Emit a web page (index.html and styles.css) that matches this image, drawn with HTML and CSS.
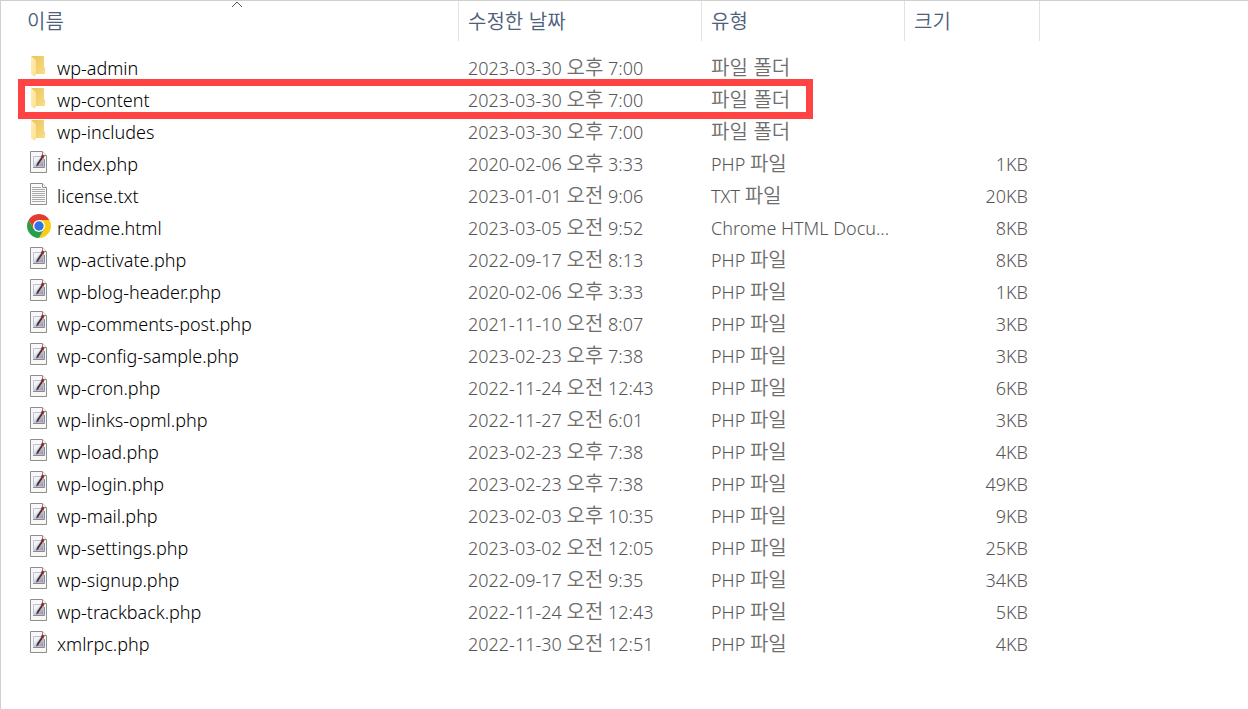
FILE: index.html
```html
<!DOCTYPE html>
<html lang="ko">
<head>
    <meta charset="utf-8">
    <meta name="viewport" content="width=device-width, initial-scale=1">
    <title>파일 목록</title>
    <link rel="stylesheet" href="styles.css">
</head>
<body>
<svg class="sprite" aria-hidden="true">
    <defs>
        <linearGradient id="folder-back" x1="0" y1="0" x2="1" y2="1">
            <stop offset="0" stop-color="#e8c35e"/>
            <stop offset="1" stop-color="#fbdc82"/>
        </linearGradient>
        <linearGradient id="folder-front" x1="0" y1="0" x2="1" y2="1">
            <stop offset="0" stop-color="#ffefb8"/>
            <stop offset="1" stop-color="#fbdf8c"/>
        </linearGradient>
        <linearGradient id="pad" x1="0" y1="0" x2="1" y2="1">
            <stop offset="0.3" stop-color="#f4f4fc"/>
            <stop offset="1" stop-color="#7d83b8"/>
        </linearGradient>
    </defs>
    <symbol id="folder" viewBox="0 0 24 24">
        <path d="M4 2h13v11l1 1v6H7z" fill="url(#folder-back)"/>
        <path d="M4 2l5 4v14l-1 3-4-3z" fill="url(#folder-front)"/>
    </symbol>
    <symbol id="php" viewBox="0 0 24 24">
        <path d="M3.5 1.5h12l4 4v17h-16z" fill="#f8f8f8" stroke="#8e8e8e"/>
        <path d="M15.5 1.5v4h4" fill="#fff" stroke="#8e8e8e"/>
        <path d="M6.500 6.500h10v10h-10z" fill="url(#pad)" stroke="#c2c2cc"/>
        <path d="M6 17.500h11.500V9" fill="none" stroke="#8a8a9c"/>
        <path d="M10.500 14.500l5-7.500" stroke="#3c3848" stroke-width="2"/>
        <path d="M12 15l4.500-7" stroke="#e0a060"/>
        <path d="M15 7.500l1.500-2.500" stroke="#8c3434" stroke-width="3"/>
        <path d="M9 16.500l1-3 2 1.500z" fill="#4a3c3c"/>
    </symbol>
    <symbol id="txt" viewBox="0 0 24 24">
        <path d="M3.5 1.5h12l4 4v17h-16z" fill="#fafafa" stroke="#8e8e8e"/>
        <path d="M15.5 1.5v4h4" fill="#fff" stroke="#8e8e8e"/>
        <path d="M5 5.500h9M5 7.500h13M5 9.500h13M5 11.500h13M5 13.500h13M5 15.500h13M5 17.500h13M5 19.500h13" stroke="#a8a8a8"/>
    </symbol>
    <symbol id="chrome" viewBox="0 0 24 24">
        <path d="M12 6h10.390A12 12 0 0 1 12 24l5.200-9z" fill="#fccb16"/>
        <path d="M1.610 6A12 12 0 0 0 12 24l5.200-9H6.800z" fill="#2a9d48"/>
        <path d="M1.610 6L6.800 15 12 12V6h10.390A12 12 0 0 0 1.610 6z" fill="#e33b2e"/>
        <circle cx="12" cy="12" r="6" fill="#fff"/>
        <circle cx="12" cy="12" r="4.700" fill="#2f74e0"/>
    </symbol>
</svg>

<main class="explorer">
    <table class="files">
        <colgroup>
            <col class="col-name">
            <col class="col-date">
            <col class="col-type">
            <col class="col-size">
            <col>
        </colgroup>
        <thead>
            <tr>
                <th aria-sort="ascending">
                    <button type="button">이름</button>
                    <svg class="sort" viewBox="0 0 12 7" aria-hidden="true"><path d="M1 6l5-5 5 5" fill="none" stroke="#555"/></svg>
                </th>
                <th><button type="button">수정한 날짜</button></th>
                <th><button type="button">유형</button></th>
                <th><button type="button">크기</button></th>
                <td></td>
            </tr>
        </thead>
        <tbody>
            <tr>
                <td><div class="name"><svg class="icon"><use href="#folder"/></svg>wp-admin</div></td>
                <td>2023-03-30 <span class="ko">오후</span> 7:00</td><td><span class="ko">파일 폴더</span></td><td class="size"></td><td></td>
            </tr>
            <tr class="marked">
                <td><div class="name"><svg class="icon"><use href="#folder"/></svg>wp-content</div><span class="marker"></span></td>
                <td>2023-03-30 <span class="ko">오후</span> 7:00</td><td><span class="ko">파일 폴더</span></td><td class="size"></td><td></td>
            </tr>
            <tr>
                <td><div class="name"><svg class="icon"><use href="#folder"/></svg>wp-includes</div></td>
                <td>2023-03-30 <span class="ko">오후</span> 7:00</td><td><span class="ko">파일 폴더</span></td><td class="size"></td><td></td>
            </tr>
            <tr>
                <td><div class="name"><svg class="icon"><use href="#php"/></svg>index.php</div></td>
                <td>2020-02-06 <span class="ko">오후</span> 3:33</td><td>PHP <span class="ko">파일</span></td><td class="size">1KB</td><td></td>
            </tr>
            <tr>
                <td><div class="name"><svg class="icon"><use href="#txt"/></svg>license.txt</div></td>
                <td>2023-01-01 <span class="ko">오전</span> 9:06</td><td>TXT <span class="ko">파일</span></td><td class="size">20KB</td><td></td>
            </tr>
            <tr>
                <td><div class="name"><svg class="icon"><use href="#chrome"/></svg>readme.html</div></td>
                <td>2023-03-05 <span class="ko">오전</span> 9:52</td><td>Chrome HTML Docu...</td><td class="size">8KB</td><td></td>
            </tr>
            <tr>
                <td><div class="name"><svg class="icon"><use href="#php"/></svg>wp-activate.php</div></td>
                <td>2022-09-17 <span class="ko">오전</span> 8:13</td><td>PHP <span class="ko">파일</span></td><td class="size">8KB</td><td></td>
            </tr>
            <tr>
                <td><div class="name"><svg class="icon"><use href="#php"/></svg>wp-blog-header.php</div></td>
                <td>2020-02-06 <span class="ko">오후</span> 3:33</td><td>PHP <span class="ko">파일</span></td><td class="size">1KB</td><td></td>
            </tr>
            <tr>
                <td><div class="name"><svg class="icon"><use href="#php"/></svg>wp-comments-post.php</div></td>
                <td>2021-11-10 <span class="ko">오전</span> 8:07</td><td>PHP <span class="ko">파일</span></td><td class="size">3KB</td><td></td>
            </tr>
            <tr>
                <td><div class="name"><svg class="icon"><use href="#php"/></svg>wp-config-sample.php</div></td>
                <td>2023-02-23 <span class="ko">오후</span> 7:38</td><td>PHP <span class="ko">파일</span></td><td class="size">3KB</td><td></td>
            </tr>
            <tr>
                <td><div class="name"><svg class="icon"><use href="#php"/></svg>wp-cron.php</div></td>
                <td>2022-11-24 <span class="ko">오전</span> 12:43</td><td>PHP <span class="ko">파일</span></td><td class="size">6KB</td><td></td>
            </tr>
            <tr>
                <td><div class="name"><svg class="icon"><use href="#php"/></svg>wp-links-opml.php</div></td>
                <td>2022-11-27 <span class="ko">오전</span> 6:01</td><td>PHP <span class="ko">파일</span></td><td class="size">3KB</td><td></td>
            </tr>
            <tr>
                <td><div class="name"><svg class="icon"><use href="#php"/></svg>wp-load.php</div></td>
                <td>2023-02-23 <span class="ko">오후</span> 7:38</td><td>PHP <span class="ko">파일</span></td><td class="size">4KB</td><td></td>
            </tr>
            <tr>
                <td><div class="name"><svg class="icon"><use href="#php"/></svg>wp-login.php</div></td>
                <td>2023-02-23 <span class="ko">오후</span> 7:38</td><td>PHP <span class="ko">파일</span></td><td class="size">49KB</td><td></td>
            </tr>
            <tr>
                <td><div class="name"><svg class="icon"><use href="#php"/></svg>wp-mail.php</div></td>
                <td>2023-02-03 <span class="ko">오후</span> 10:35</td><td>PHP <span class="ko">파일</span></td><td class="size">9KB</td><td></td>
            </tr>
            <tr>
                <td><div class="name"><svg class="icon"><use href="#php"/></svg>wp-settings.php</div></td>
                <td>2023-03-02 <span class="ko">오전</span> 12:05</td><td>PHP <span class="ko">파일</span></td><td class="size">25KB</td><td></td>
            </tr>
            <tr>
                <td><div class="name"><svg class="icon"><use href="#php"/></svg>wp-signup.php</div></td>
                <td>2022-09-17 <span class="ko">오전</span> 9:35</td><td>PHP <span class="ko">파일</span></td><td class="size">34KB</td><td></td>
            </tr>
            <tr>
                <td><div class="name"><svg class="icon"><use href="#php"/></svg>wp-trackback.php</div></td>
                <td>2022-11-24 <span class="ko">오전</span> 12:43</td><td>PHP <span class="ko">파일</span></td><td class="size">5KB</td><td></td>
            </tr>
            <tr>
                <td><div class="name"><svg class="icon"><use href="#php"/></svg>xmlrpc.php</div></td>
                <td>2022-11-30 <span class="ko">오전</span> 12:51</td><td>PHP <span class="ko">파일</span></td><td class="size">4KB</td><td></td>
            </tr>
        </tbody>
    </table>
</main>
</body>
</html>
```
FILE: styles.css
```css
* {
    box-sizing: border-box;
}
body {
    margin: 0;
    background: #fff;
    color: #555;
    font-family: "Noto Sans", "Noto Sans CJK KR", sans-serif;
    font-size: 18px;
    font-weight: 300;
    line-height: 24px;
}
.sprite {
    position: absolute;
    width: 0;
    height: 0;
}
.explorer {
    min-height: 100vh;
    border-top: 1px solid #d0d0d0;
    border-left: 1px solid #d0d0d0;
}
.files {
    width: 100%;
    table-layout: fixed;
    border-collapse: separate;
    border-spacing: 0;
}
.col-name {
    width: 458px;
}
.col-date {
    width: 243px;
}
.col-type {
    width: 203px;
}
.col-size {
    width: 135px;
}
.files th {
    position: relative;
    height: 40px;
    padding: 0 0 0 9px;
    border-right: 1px solid #e2e2e2;
    text-align: left;
}
.files th:first-child {
    padding-left: 26px;
}
.files th button {
    display: block;
    padding: 0;
    border: 0;
    background: none;
    color: #4c607a;
    font-family: "Noto Sans CJK KR", sans-serif;
    font-size: 20px;
    font-weight: 350;
    line-height: 24px;
}
.sort {
    position: absolute;
    top: 0;
    left: 50%;
    width: 14px;
    height: 7px;
}
.files tbody::before {
    content: "";
    display: block;
    height: 11px;
}
.files tbody td {
    height: 32px;
    padding: 0 0 0 9px;
    white-space: nowrap;
    vertical-align: middle;
}
.files tbody td:first-child {
    padding-left: 26px;
    color: #000;
}
.files tbody .size {
    padding-right: 12px;
    text-align: right;
}
.name {
    display: flex;
    align-items: center;
    gap: 6px;
}
.icon {
    width: 24px;
    height: 24px;
    margin-bottom: 4px;
}
.ko {
    color: #6d6d6d;
    font-family: "Noto Sans CJK KR", sans-serif;
    font-size: 20px;
    font-weight: 350;
    line-height: 1px;
}
.marked td:first-child {
    position: relative;
}
.marker {
    position: absolute;
    top: -5px;
    left: 17px;
    width: 795px;
    height: 40px;
    border: 7px solid #ff4242;
    pointer-events: none;
}
```
